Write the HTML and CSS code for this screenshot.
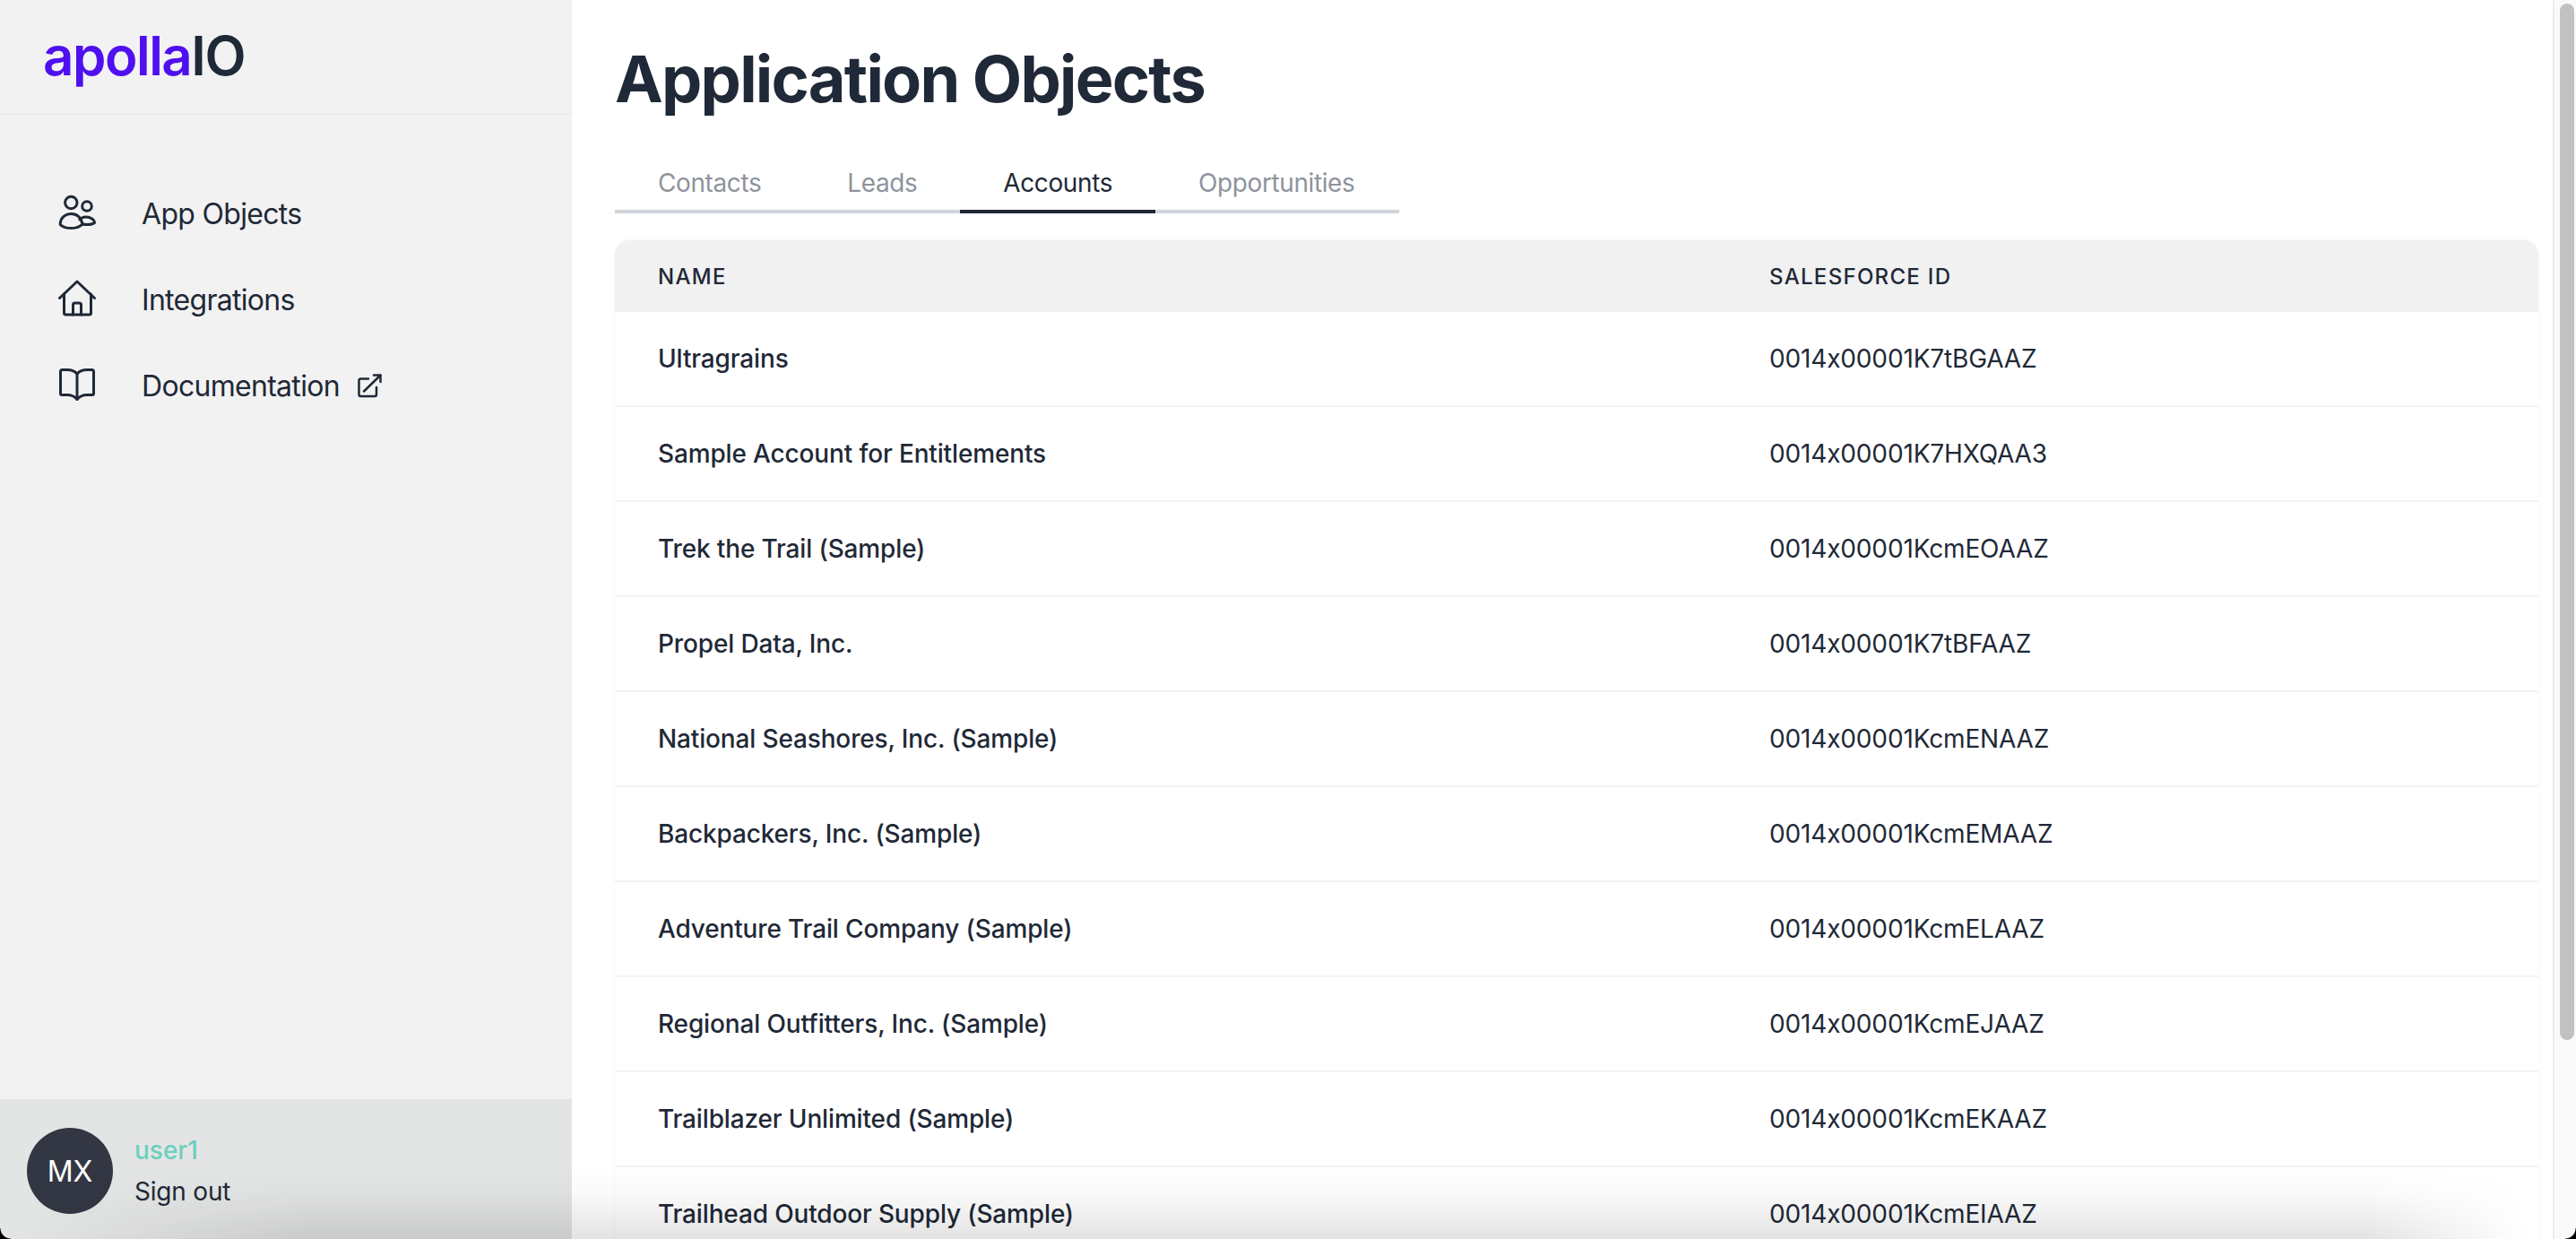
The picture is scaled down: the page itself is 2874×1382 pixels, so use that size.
FILE: index.html
```html
<!DOCTYPE html>
<html lang="en">
<head>
<meta charset="utf-8">
<title>apollaIO - Application Objects</title>
<link rel="stylesheet" href="styles.css">
</head>
<body>
<div class="app">
  <aside class="sidebar">
    <div class="brand"><span class="brand-a">apolla</span><span class="brand-b">IO</span></div>
    <nav class="nav">
      <a class="nav-item">
        <svg class="nav-icon" viewBox="0 0 48 48" fill="none" stroke="currentColor" stroke-width="3" stroke-linecap="round" stroke-linejoin="round"><circle cx="17.3" cy="12" r="6.7"/><circle cx="35" cy="16" r="5.3"/><path d="M5.2 36.5c0-7 5-12 12.3-12s11 5 12.5 11.5c-3 3-8 4.6-12.5 4.6S8 39.3 5.2 36.5Z"/><path d="M27 31c1.5-2 4-3 7-3 5 0 9.5 3 9.5 6.5-2 1.5-5 2-8 2-2 0-4 0-5.5-.5"/></svg>
        <span>App Objects</span>
      </a>
      <a class="nav-item">
        <svg class="nav-icon" viewBox="0 0 48 48" fill="none" stroke="currentColor" stroke-width="3" stroke-linecap="round" stroke-linejoin="round"><path d="M4.5 22.5 24 4l19.5 18.5"/><path d="M9.5 18v21a2 2 0 0 0 2 2h26a2 2 0 0 0 2-2V18"/><path d="M19.5 41V30a2 2 0 0 1 2-2h5a2 2 0 0 1 2 2v11"/></svg>
        <span>Integrations</span>
      </a>
      <a class="nav-item">
        <svg class="nav-icon" viewBox="0 0 48 48" fill="none" stroke="currentColor" stroke-width="3" stroke-linecap="round" stroke-linejoin="round"><path d="M24 11c-2.500-3-6-4.500-11-4.500H7.500a2 2 0 0 0-2 2V33A1.500 1.500 0 0 0 7 34.500h6c5 0 8.500 2 11 5 2.500-3 6-5 11-5h6a1.500 1.500 0 0 0 1.500-1.500V8.500a2 2 0 0 0-2-2H35c-5 0-8.500 1.500-11 4.500Z"/><path d="M24 11v28"/></svg>
        <span>Documentation</span>
        <svg class="ext-icon" viewBox="0 0 27 27" fill="none" stroke="currentColor" stroke-width="2.500" stroke-linecap="round" stroke-linejoin="round"><path d="M12 5.500H3.500a2 2 0 0 0-2 2V23a2 2 0 0 0 2 2H19a2 2 0 0 0 2-2v-8"/><path d="M18 1.500h7.500V9"/><path d="M25.500 1.500 7 19.500"/></svg>
      </a>
    </nav>
    <div class="user">
      <div class="avatar">MX</div>
      <div class="user-text">
        <div class="user-name">user1</div>
        <div class="sign-out">Sign out</div>
      </div>
    </div>
  </aside>
  <main class="main">
    <div class="content">
      <h1 class="title">Application Objects</h1>
      <div class="tabs">
        <div class="tab">Contacts</div>
        <div class="tab">Leads</div>
        <div class="tab tab-active">Accounts</div>
        <div class="tab">Opportunities</div>
      </div>
      <div class="table">
        <div class="row head"><div class="col-name">Name</div><div class="col-id">Salesforce ID</div></div>
        <div class="row"><div class="col-name">Ultragrains</div><div class="col-id">0014x00001K7tBGAAZ</div></div>
        <div class="row"><div class="col-name">Sample Account for Entitlements</div><div class="col-id">0014x00001K7HXQAA3</div></div>
        <div class="row"><div class="col-name">Trek the Trail (Sample)</div><div class="col-id">0014x00001KcmEOAAZ</div></div>
        <div class="row"><div class="col-name">Propel Data, Inc.</div><div class="col-id">0014x00001K7tBFAAZ</div></div>
        <div class="row"><div class="col-name">National Seashores, Inc. (Sample)</div><div class="col-id">0014x00001KcmENAAZ</div></div>
        <div class="row"><div class="col-name">Backpackers, Inc. (Sample)</div><div class="col-id">0014x00001KcmEMAAZ</div></div>
        <div class="row"><div class="col-name">Adventure Trail Company (Sample)</div><div class="col-id">0014x00001KcmELAAZ</div></div>
        <div class="row"><div class="col-name">Regional Outfitters, Inc. (Sample)</div><div class="col-id">0014x00001KcmEJAAZ</div></div>
        <div class="row"><div class="col-name">Trailblazer Unlimited (Sample)</div><div class="col-id">0014x00001KcmEKAAZ</div></div>
        <div class="row"><div class="col-name">Trailhead Outdoor Supply (Sample)</div><div class="col-id">0014x00001KcmEIAAZ</div></div>
      </div>
    </div>
    <div class="scrollbar"><div class="thumb"></div></div>
  </main>
</div>
<div class="window-shade"></div>
<div class="corner corner-left"></div>
<div class="corner corner-right"></div>
</body>
</html>
```
FILE: styles.css
```css
* { box-sizing: border-box; }
html, body { margin: 0; height: 100%; overflow: hidden; }
body { font-family: Inter, "Liberation Sans", sans-serif; font-feature-settings: "calt" 0; color: #1f2937; background: #fff; }
.app { display: flex; height: 1382px; }

.sidebar { width: 638px; flex: none; display: flex; flex-direction: column; background: #f2f2f2; }
.brand { height: 128px; padding: 26px 0 0 48px; font-size: 60px; line-height: 72px; font-weight: 600; letter-spacing: -1.500px; border-bottom: 2px solid #ececec; }
.brand-a { color: #4f10f0; }
.brand-b { color: #1f2937; }
.nav { flex: 1; padding-top: 62px; display: flex; flex-direction: column; }
.nav-item { height: 96px; display: flex; align-items: center; padding-left: 62px; font-size: 32px; letter-spacing: -.7px; color: #1f2937; }
.nav-icon { width: 48px; height: 48px; margin-right: 48px; flex: none; }
.ext-icon { width: 27px; height: 27px; margin-left: 20px; flex: none; }
.user { height: 156px; background: #e3e5e4; display: flex; align-items: center; padding: 4px 30px 0; gap: 24px; }
.avatar { width: 96px; height: 96px; border-radius: 50%; background: #333743; color: #fff; display: flex; align-items: center; justify-content: center; font-size: 32px; }
.user-name { color: #6dcfbd; font-size: 28px; line-height: 46px; font-weight: 500; }
.sign-out { font-size: 28px; line-height: 46px; font-weight: 400; letter-spacing: -.2px; }

.main { flex: 1; display: flex; min-width: 0; }
.content { flex: 1; min-width: 0; overflow: hidden; padding: 0 16px 0 48px; }
.title { margin: 0; padding-top: 44px; height: 176px; font-size: 72px; line-height: 88px; font-weight: 700; letter-spacing: -1.800px; color: #1f2937; }
.tabs { display: flex; width: 875px; height: 62px; border-bottom: 4px solid #d1d5db; margin-bottom: 30px; }
.tab { height: 62px; padding: 0 48px; font-size: 28px; line-height: 57px; letter-spacing: -.4px; color: #8e939c; }
.tab-active { color: #1f2937; border-bottom: 4px solid #1f2937; }
.table { box-shadow: 0 0 4px rgba(0, 0, 0, .05); border-radius: 16px 16px 0 0; overflow: hidden; }
.row { display: flex; height: 106px; align-items: center; padding-left: 48px; border-bottom: 2px solid #f3f3f3; font-size: 28px; letter-spacing: -.15px; background: #fff; }
.col-name { width: 1240px; font-weight: 500; }
.col-id { font-weight: 400; }
.head { height: 80px; background: #f1f1f1; border: 0; font-size: 24px; text-transform: uppercase; letter-spacing: 1.300px; }
.head .col-id { font-weight: 500; }

.scrollbar { width: 26px; flex: none; border-left: 2px solid #ececec; background: #fafafa; padding: 4px 2px 0 6px; }
.thumb { height: 1156px; border-radius: 8px; background: #c1c1c1; }

.window-shade { position: fixed; left: 0; right: 0; bottom: 0; height: 82px; pointer-events: none;
  background: linear-gradient(to bottom, rgba(0,0,0,0), rgba(0,0,0,.02) 37%, rgba(0,0,0,.06) 65%, rgba(0,0,0,.11));
  -webkit-mask-image: linear-gradient(to right, transparent 20px, #000 340px, #000 2640px, transparent 2820px);
  mask-image: linear-gradient(to right, transparent 20px, #000 340px, #000 2640px, transparent 2820px); }
.corner { position: fixed; bottom: 0; width: 12px; height: 12px; pointer-events: none; }
.corner-left { left: 0; background: radial-gradient(circle at 100% 0, transparent 11px, #000 12px); }
.corner-right { right: 0; background: radial-gradient(circle at 0 0, transparent 11px, #000 12px); }
```
